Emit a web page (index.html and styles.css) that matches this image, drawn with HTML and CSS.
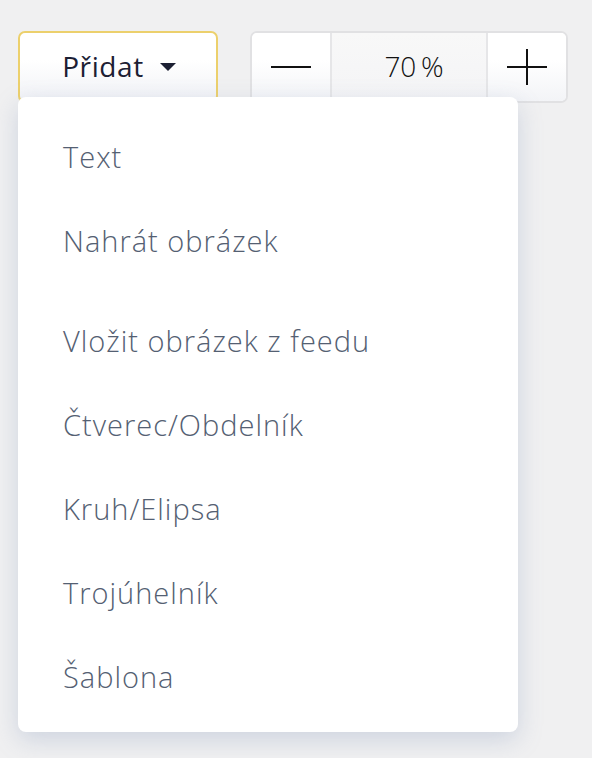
FILE: index.html
```html
<!DOCTYPE html>
<html lang="cs">
<head>
  <meta charset="UTF-8" />
  <title>Editor</title>
  <link rel="stylesheet" href="styles.css">
</head>
<body>
  <div class="toolbar">
    <div class="add-wrap">
      <button class="add-btn">Přidat <span class="caret"></span></button>
      <ul class="menu">
        <li>Text</li>
        <li class="sep">Nahrát obrázek</li>
        <li>Vložit obrázek z feedu</li>
        <li>Čtverec/Obdelník</li>
        <li>Kruh/Elipsa</li>
        <li>Trojúhelník</li>
        <li>Šablona</li>
      </ul>
    </div>
    <div class="zoom">
      <button class="zoom-btn" aria-label="Zmenšit">
        <svg width="40" height="40" viewBox="0 0 40 40"><path d="M0 20h40" stroke="#111" stroke-width="2"/></svg>
      </button>
      <div class="zoom-value">70&#8201;%</div>
      <button class="zoom-btn" aria-label="Zvětšit">
        <svg width="40" height="40" viewBox="0 0 40 40"><path d="M0 20h40M20 2v36" stroke="#111" stroke-width="2"/></svg>
      </button>
    </div>
  </div>
</body>
</html>
```
FILE: styles.css
```css
html, body {
  min-height: 100%;
  height: 100%;
}
body {
  margin: 0;
  background-color: #f0f0f1;
  font-family: "Open Sans", "Noto Sans", sans-serif;
}
.toolbar {
  display: flex;
  gap: 32px;
  padding: 31px 18px;
}
.add-wrap {
  position: relative;
}
.add-btn {
  width: 200px;
  height: 72px;
  border: 2px solid #ecd06c;
  border-radius: 7px;
  background: linear-gradient(#ffffff 40%, #f1f2f6);
  font-family: inherit;
  font-size: 28px;
  letter-spacing: 0.6px;
  color: #1c2033;
  display: flex;
  align-items: center;
  justify-content: center;
  gap: 16px;
  padding: 0 0 2px 2px;
}
.caret {
  width: 0;
  height: 0;
  border-left: 8px solid transparent;
  border-right: 8px solid transparent;
  border-top: 8px solid #1c2033;
  margin-top: 2px;
}
.menu {
  position: absolute;
  top: 66px;
  left: 0;
  width: 500px;
  margin: 0;
  padding: 18px 0 13px;
  list-style: none;
  background: white;
  border-radius: 8px;
  box-shadow: 0 8px 24px rgba(120, 140, 180, 0.28);
}
.menu li {
  height: 84px;
  display: flex;
  align-items: center;
  padding-left: 45px;
  padding-bottom: 2px;
  box-sizing: border-box;
  font-size: 29px;
  font-weight: 300;
  letter-spacing: 1px;
  color: #546072;
}
.menu li.sep {
  margin-bottom: 16px;
}
.zoom {
  display: flex;
  height: 72px;
  border: 2px solid #e1e1e3;
  border-radius: 7px;
  background: white;
  box-sizing: border-box;
  overflow: hidden;
}
.zoom-btn {
  width: 78px;
  border: none;
  background: linear-gradient(#ffffff 40%, #f3f4f7);
  display: flex;
  align-items: center;
  justify-content: center;
  padding: 0;
}
.zoom-value {
  width: 158px;
  box-sizing: border-box;
  border-left: 2px solid #e6e6e8;
  border-right: 2px solid #e6e6e8;
  background: linear-gradient(#f8f8f8, #f4f4f6);
  display: flex;
  align-items: center;
  justify-content: center;
  font-size: 28px;
  font-weight: 300;
  color: #111;
  padding: 0 0 2px 10px;
}
```
